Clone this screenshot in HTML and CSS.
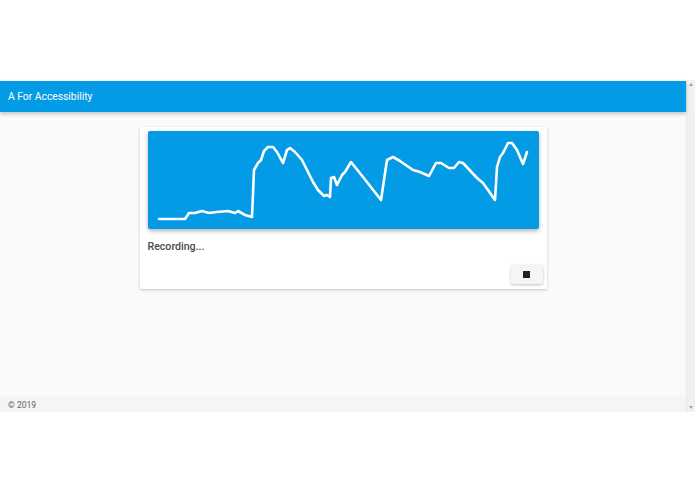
FILE: index.html
```html
<!DOCTYPE html>
<html lang="en">
<head>
<meta charset="utf-8">
<title>A For Accessibility</title>
<link rel="stylesheet" href="styles.css">
</head>
<body>
<div class="frame">
  <div class="app">
    <header class="topbar">A For Accessibility</header>
    <main class="main">
      <section class="card">
        <div class="chart">
          <svg class="wave" viewBox="0 0 391 98" width="391" height="98">
            <polyline points="11,88 37,88 41,82 47,82 54,80 61,82 69,81 80,80 87,82 90,80 97,84 104,86 106,39 110,32 113,29 116,20 120,16 125,16 129,21 135,32 139,19 142,17 147,21 154,29 165,51 170,59 176,65 179,64 182,66 183,47 186,46 189,54 194,44 197,41 203,31 215,46 233,69 239,29 245,26 252,30 265,39 272,41 281,45 288,32 293,32 301,37 306,37 311,31 315,32 329,47 335,52 340,59 347,69 349,36 352,26 355,22 360,12 364,12 369,19 375,33 379,21"/>
          </svg>
        </div>
        <p class="status">Recording...</p>
        <div class="actions">
          <button class="stop" type="button" aria-label="Stop"><span class="square"></span></button>
        </div>
      </section>
    </main>
    <footer class="foot">© 2019</footer>
  </div>
  <div class="scrollbar">
    <span class="arrow up"></span>
    <span class="arrow down"></span>
  </div>
</div>
</body>
</html>
```

FILE: styles.css
```css
html, body {
  margin: 0;
  padding: 0;
  background: #ffffff;
  font-family: Roboto, "Liberation Sans", Arial, sans-serif;
}

.frame {
  margin-top: 80px;
  height: 332px;
  display: flex;
}

.app {
  flex: 1;
  display: flex;
  flex-direction: column;
  background: #ffffff;
}

.topbar {
  margin-top: 1px;
  height: 31px;
  display: flex;
  align-items: center;
  padding-left: 8px;
  background: #039be5;
  color: #ffffff;
  font-size: 10.3px;
  font-weight: 400;
  box-shadow: 0 2px 4px rgba(0, 0, 0, 0.22);
  position: relative;
  z-index: 1;
}

.main {
  flex: 1;
  background: #fafafa;
  display: flex;
  flex-direction: column;
  align-items: center;
}

.card {
  margin-top: 15px;
  width: 407px;
  box-sizing: border-box;
  padding: 4px 8px 5px 8px;
  background: #ffffff;
  box-shadow: 0 1px 3px rgba(0, 0, 0, 0.22);
  border-radius: 2px;
}

.chart {
  height: 98px;
  background: #039be5;
  box-shadow: 0 2px 4px rgba(0, 0, 0, 0.3);
  border-radius: 2px;
}

.wave {
  display: block;
}

.wave polyline {
  fill: none;
  stroke: #ffffff;
  stroke-width: 2.6;
  stroke-linejoin: round;
  stroke-linecap: round;
}

.status {
  margin: 10px 0 0 0;
  height: 16px;
  line-height: 16px;
  font-size: 10.6px;
  font-weight: 500;
  color: #4a4a4a;
}

.actions {
  margin-top: 10px;
  margin-right: -4px;
  display: flex;
  justify-content: flex-end;
}

.stop {
  width: 32px;
  height: 19px;
  padding: 0;
  border: none;
  border-radius: 2px;
  background: #f5f5f5;
  box-shadow: 0 1px 3px rgba(0, 0, 0, 0.25);
  display: flex;
  align-items: center;
  justify-content: center;
}

.square {
  width: 7px;
  height: 7px;
  background: #212121;
}

.foot {
  height: 16px;
  display: flex;
  align-items: center;
  padding-left: 8px;
  padding-top: 1px;
  box-sizing: border-box;
  background: #f5f5f5;
  color: #616161;
  font-size: 8.6px;
}

.scrollbar {
  width: 9px;
  background: #f1f1f1;
  border-left: 1px solid #e8e8e8;
  display: flex;
  flex-direction: column;
  justify-content: space-between;
  align-items: center;
  padding: 3px 0;
  box-sizing: border-box;
}

.arrow {
  width: 0;
  height: 0;
  border-left: 2px solid transparent;
  border-right: 2px solid transparent;
}

.arrow.up {
  border-bottom: 3px solid #a3a3a3;
}

.arrow.down {
  border-top: 3px solid #a3a3a3;
}
```
